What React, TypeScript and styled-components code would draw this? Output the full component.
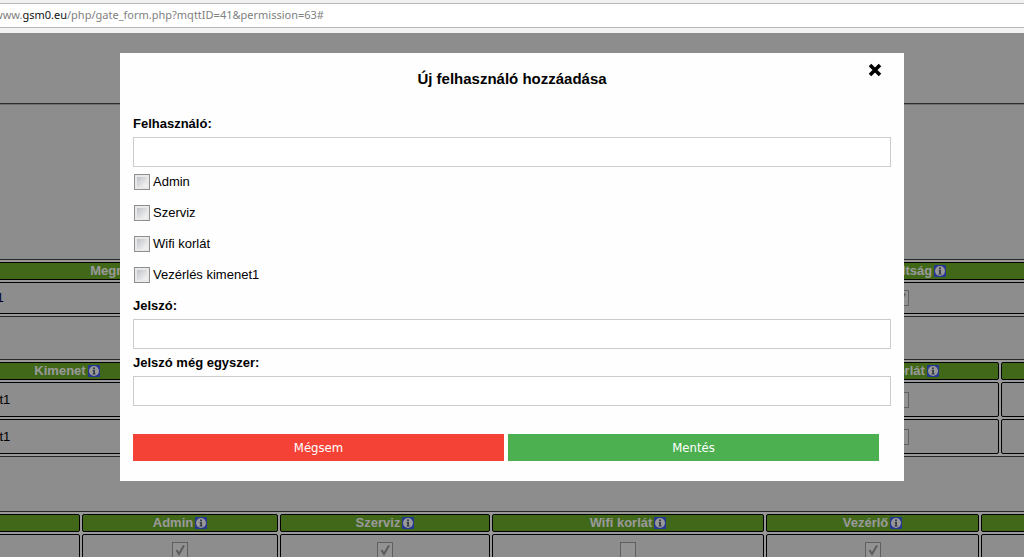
import React from 'react';
import styled, { createGlobalStyle } from 'styled-components';

const GlobalStyle = createGlobalStyle`
  *, *::before, *::after { box-sizing: border-box; }
  html, body, #root { height: 100%; }
  body {
    margin: 0;
    overflow: hidden;
    background: #ebebeb;
    color: #000;
    font: 13px/18px "Liberation Sans", Arial, sans-serif;
  }
`;

const Shell = styled.div`
  display: flex;
  flex-direction: column;
  height: 100%;
  overflow: hidden;
`;

const BrowserBar = styled.header`
  flex: none;
  padding: 3px 0 5px;
  background: #f2f2f2;
`;

const Address = styled.div`
  padding-bottom: 1px;
  border: solid #b8b8b8;
  border-width: 1px 0;
  background: #fff;
  color: #808080;
  font: 11px/22px "Noto Sans", sans-serif;
  text-indent: -6px;
  white-space: nowrap;
`;

const Host = styled.span`
  color: #111;
`;

const Viewport = styled.div`
  position: relative;
  flex: 1;
  min-height: 0;
  overflow: hidden;
`;

const Page = styled.main`
  padding-top: 70px;
`;

const Rule = styled.hr`
  margin: 0 0 154px;
  border: solid #4c4c4c;
  border-width: 1px 0 0;
  border-bottom: 1px solid #b8b8b8;
`;

const Table = styled.table<{ $gap: number }>`
  width: calc(100% + 300px);
  margin: 0 0 ${(p) => p.$gap}px -100px;
  table-layout: fixed;
  border: 1px solid #444;
  border-spacing: 2px;
  background: #fff;
`;

const HeadCell = styled.th`
  height: 18px;
  padding: 0;
  border: 1px solid #000;
  border-radius: 2px;
  background: #6bad28;
  color: #fff;
  line-height: 16px;
  white-space: nowrap;
`;

const Cell = styled.td<{ $height: number; $align?: string }>`
  height: ${(p) => p.$height}px;
  padding: 0;
  border: 1px solid #000;
  border-radius: 2px;
  background: #ebebeb;
  text-align: ${(p) => p.$align ?? 'center'};
  line-height: 16px;
  white-space: nowrap;
`;

const DeviceLink = styled.a`
  color: #000040;
  text-decoration: none;
`;

const InfoSvg = styled.svg`
  width: 12px;
  height: 12px;
  margin-left: 2px;
  vertical-align: -2px;
`;

const StateBox = styled.input`
  appearance: none;
  display: inline-block;
  width: 16px;
  height: 16px;
  margin: 0;
  border: 1px solid #a0a0a0;
  background: #f4f4f4;
  vertical-align: middle;

  &:checked {
    background: #f4f4f4
      url("data:image/svg+xml,%3Csvg xmlns='http://www.w3.org/2000/svg' viewBox='0 0 14 14'%3E%3Cpath d='M3.5 7l2.5 4 5-8.500' fill='none' stroke='%23999' stroke-width='2'/%3E%3C/svg%3E");
  }
`;

const Backdrop = styled.div`
  position: absolute;
  inset: 0;
  padding: 20px 120px;
  background: rgba(0, 0, 0, 0.4);
`;

const Dialog = styled.form`
  position: relative;
  padding: 17px 13px 20px;
  background: #fefefe;
`;

const Title = styled.h2`
  margin: 0 0 22px;
  font-size: 15px;
  line-height: 18px;
  text-align: center;
`;

const Close = styled.button`
  position: absolute;
  top: 8px;
  right: 20px;
  display: flex;
  padding: 2px;
  border: 0;
  background: none;
  cursor: pointer;
`;

const Field = styled.label`
  display: flex;
  flex-direction: column;
  gap: 4px;
  padding-top: 5px;
  font-weight: bold;
`;

const TextBox = styled.input`
  width: 100%;
  height: 30px;
  padding: 4px 8px;
  border: 1px solid #ccc;
  background: #fff;
  font: inherit;
  font-weight: normal;
`;

const Options = styled.div`
  padding-bottom: 1px;
`;

const Option = styled.label`
  display: flex;
  align-items: center;
  gap: 3px;
  height: 31px;
  padding: 0 0 1px 1px;
`;

const OptionBox = styled.input`
  appearance: none;
  width: 16px;
  height: 16px;
  margin: 0;
  padding: 2px;
  border: 1px solid #8e8f8f;
  background:
    linear-gradient(135deg, #bfc3c8, #f6f6f6) content-box,
    #e9e9e9;

  &:checked { background: #4caf50 content-box; }
`;

const Actions = styled.div`
  display: flex;
  gap: 4px;
  margin-top: 28px;
  padding-right: 12px;
`;

const ActionButton = styled.button<{ $color: string }>`
  flex: 1;
  height: 27px;
  padding: 1px 0 0;
  border: 0;
  background: ${(p) => p.$color};
  color: #fff;
  font: 13px/26px "DejaVu Sans Condensed", "Noto Sans", sans-serif;
  cursor: pointer;
`;

const InfoIcon = () => (
  <InfoSvg viewBox="0 0 12 12" aria-hidden="true">
    <rect width="12" height="12" rx="1" fill="#3f5cf5" />
    <circle cx="6" cy="6" r="5" fill="#fff" />
    <path d="M5 2.6h2v1.6H5zM4.6 5h2.4v3.4h.6v1H4.5v-1h.7V6h-.6z" fill="#5a6478" />
  </InfoSvg>
);

type Value = string | boolean | null;

interface GridProps {
  widths: number[];
  heads: string[];
  rows: Value[][];
  rowHeight: number;
  gap: number;
  link?: boolean;
}

const Grid = ({ widths, heads, rows, rowHeight, gap, link }: GridProps) => (
  <Table $gap={gap}>
    <colgroup>
      {widths.map((w, i) => (
        <col key={i} style={{ width: w }} />
      ))}
      <col />
    </colgroup>
    <thead>
      <tr>
        {heads.map((h, i) => (
          <HeadCell key={i}>
            {h}
            {h && <InfoIcon />}
          </HeadCell>
        ))}
      </tr>
    </thead>
    <tbody>
      {rows.map((row, r) => (
        <tr key={r}>
          {row.map((v, i) => (
            <Cell key={i} $height={rowHeight} $align={typeof v === 'string' ? 'left' : 'center'}>
              {typeof v === 'string' && (link ? <DeviceLink href="#">{v}</DeviceLink> : v)}
              {typeof v === 'boolean' && (
                <StateBox type="checkbox" checked={v} readOnly aria-label={heads[i]} />
              )}
            </Cell>
          ))}
        </tr>
      ))}
    </tbody>
  </Table>
);

const permissions = ['Admin', 'Szerviz', 'Wifi korlát', 'Vezérlés kimenet1'];

export default function App() {
  return (
    <>
      <GlobalStyle />
      <Shell>
        <BrowserBar>
          <Address>
            www.<Host>gsm0.eu</Host>/php/gate_form.php?mqttID=41&amp;permission=63#
          </Address>
        </BrowserBar>
        <Viewport>
          <Page>
            <Rule />
            <Grid
              widths={[465, 398, 262]}
              heads={['Megnevezés', '', 'Jogosultság', '']}
              rows={[['Kapunyitás gsm1', null, true, null]]}
              rowHeight={32}
              gap={42}
              link
            />
            <Grid
              widths={[328, 283, 282, 197]}
              heads={['Kimenet', '', '', 'Wifi korlát', '']}
              rows={[
                ['Vezérlés kimenet1', null, null, false, null],
                ['Vezérlés kimenet1', null, null, false, null],
              ]}
              rowHeight={35}
              gap={54}
            />
            <Grid
              widths={[177, 196, 210, 272, 213]}
              heads={['', 'Admin', 'Szerviz', 'Wifi korlát', 'Vezérlő', '']}
              rows={[[null, true, true, false, true, null]]}
              rowHeight={32}
              gap={42}
            />
          </Page>
          <Backdrop>
            <Dialog role="dialog" aria-labelledby="dialog-title" onSubmit={(e) => e.preventDefault()}>
              <Title id="dialog-title">Új felhasználó hozzáadása</Title>
              <Close type="button" aria-label="Bezárás">
                <svg width="14" height="14" viewBox="0 0 14 14">
                  <path d="M2 2l10 10M12 2L2 12" stroke="#000" strokeWidth="3.6" fill="none" />
                </svg>
              </Close>
              <Field>
                Felhasználó:
                <TextBox type="text" />
              </Field>
              <Options>
                {permissions.map((p) => (
                  <Option key={p}>
                    <OptionBox type="checkbox" />
                    {p}
                  </Option>
                ))}
              </Options>
              <Field>
                Jelszó:
                <TextBox type="password" />
              </Field>
              <Field>
                Jelszó még egyszer:
                <TextBox type="password" />
              </Field>
              <Actions>
                <ActionButton type="button" $color="#f44336">Mégsem</ActionButton>
                <ActionButton type="submit" $color="#4caf50">Mentés</ActionButton>
              </Actions>
            </Dialog>
          </Backdrop>
        </Viewport>
      </Shell>
    </>
  );
}
